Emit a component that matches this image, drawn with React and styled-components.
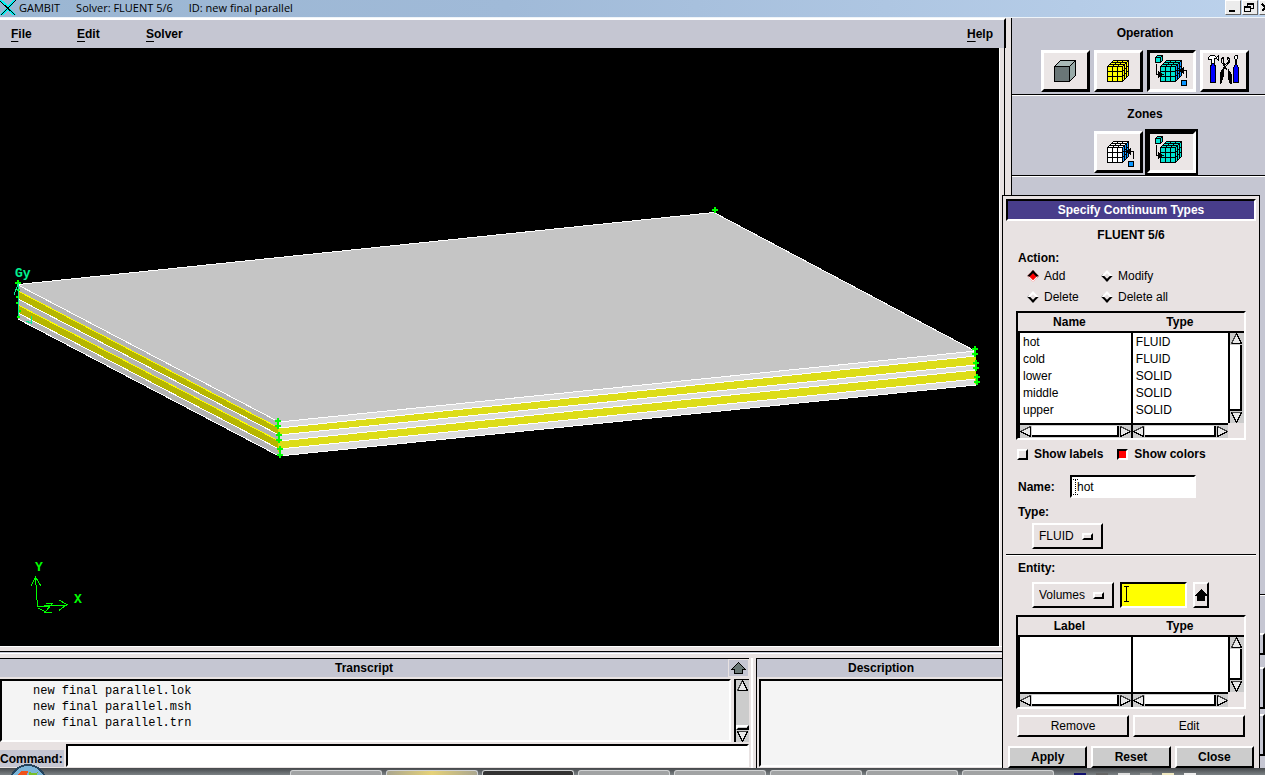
import React, { useState } from "react";
import styled, { createGlobalStyle, css } from "styled-components";

const FLUIDS = [
  ["hot", "FLUID"],
  ["cold", "FLUID"],
  ["lower", "SOLID"],
  ["middle", "SOLID"],
  ["upper", "SOLID"],
];

const FILES = ["new final parallel.lok", "new final parallel.msh", "new final parallel.trn"];

const TEAL = "#00e2d0";
const BLUE = "#0a96ff";

// small cube split in a 3x3 mesh, used by most of the tool icons
function MeshCube({ color, side }) {
  const s = side || color;
  return (
    <g stroke="#000" strokeWidth="1">
      <path d="M10.5 13.5L16.5 7.5H31.5L25.5 13.5Z" fill={color} />
      <path d="M25.5 13.5L31.5 7.5V22.5L25.5 28.5Z" fill={s} />
      <path d="M10.5 13.5H25.5V28.5H10.5Z" fill={color} />
      <path
        fill="none"
        d="M15.5 28V13.5L21.5 7.5M20.5 28V13.5L26.5 7.5M10.5 18.5H25.5L31.5 12.5M10.5 23.5H25.5L31.5 17.5M12.5 11.5H27.5V26.5M14.5 9.5H29.5V24.5"
      />
    </g>
  );
}

function CubeFrom() {
  return (
    <g stroke="#000">
      <path d="M5.5 4.5L7.5 2.5H12.5V7.5L10.5 9.5H5.5Z" fill={TEAL} />
      <path d="M5.5 4.5H10.5V9.5M10.5 4.5L12.5 2.5" fill="none" />
      <path d="M6.5 11V21.5H10" fill="none" />
      <path d="M8 18L14 21.5L8 25Z" fill="#000" stroke="none" />
    </g>
  );
}

function FaceFrom() {
  return (
    <g stroke="#000">
      <path d="M31.5 27.5H36.5V32.5H31.5Z" fill={BLUE} />
      <path d="M36.5 25V17.5H31" fill="none" />
      <path d="M34 14V21L27 17.5Z" fill="#000" stroke="none" />
    </g>
  );
}

function Geometry() {
  return (
    <Icon>
      <g stroke="#000">
        <path d="M10.5 13.5L16.5 7.5H31.5L25.5 13.5Z" fill="#a9b9b7" />
        <path d="M25.5 13.5L31.5 7.5V22.5L25.5 28.5Z" fill="#97aaa8" />
        <path d="M10.5 13.5H25.5V28.5H10.5Z" fill="#6a7677" />
      </g>
    </Icon>
  );
}

function Tools() {
  return (
    <Icon>
      <g stroke="#000">
        <path d="M5.5 4.5L7.5 2.5H11.5L13.5 4.5L15.5 2.5V7.5L13.5 5.5H11.5V10.5H8.5V6.5H5.5Z" fill="#fff" />
        <path d="M8.5 10.5H11.5L12.5 14.5V29.5H7.5V14.5Z" fill="#00f" />
        <path d="M31.5 2.5H34.5V5.5L33.5 6.5V11M31.5 2.5V5.5L32.5 6.5V11" fill="#fff" />
        <path d="M32.5 10.5H33.5L35.5 15.5V29.5H30.5V15.5Z" fill="#00f" />
        <path d="M20.5 4L18.5 6V9L22 14L24 17" fill="none" />
        <path d="M24.5 4L26.5 6V9L22 14L20 17" fill="none" />
        <path d="M21 5L20 7V9L22 12L25 9V7L24 5" fill="none" />
        <path d="M20 16L17 21V30H18L20 24Z" />
        <path d="M25 16L28 21V30H27L25 24Z" />
      </g>
    </Icon>
  );
}

// one vertical wall of the stack, cut in five layers between two corners
function Wall({ x1, x2, left, right, grey, yellow }) {
  return [0, 1, 2, 3, 4].map((i) => (
    <path
      key={i}
      d={`M${x1} ${left[i]}L${x2} ${right[i]}V${right[i + 1]}L${x1} ${left[i + 1]}Z`}
      fill={i % 2 ? yellow : grey}
    />
  ));
}

const CORNERS = [
  [715, 210], [18, 283],
  [278, 421], [278, 426], [279, 435], [279, 440], [280, 449], [280, 455],
  [975, 349], [975, 354], [976, 363], [976, 368], [977, 377], [977, 382],
];

// nodes of the far edge, seen as short ticks
const TICKS = [[18, 290], [17, 297], [17, 303], [19, 311], [18, 317]];

function Model() {
  const left = [285, 291, 299, 305, 313, 319];
  const front = [422, 428, 435, 441, 449, 456];
  const right = [351, 356, 365, 370, 379, 385];
  return (
    <Scene viewBox="0 48 999 598" role="img" aria-label="Layered volume model">
      <path d="M18 285L714 212L976 351L279 422Z" fill="#c5c5c5" />
      <Wall x1={18} x2={279} left={left} right={front} grey="#b3b3b3" yellow="#b6b600" />
      <Wall x1={279} x2={976} left={front} right={right} grey="#dcdcdc" yellow="#dddd18" />
      <g stroke="#fff" fill="none">
        <path d="M18 284.5L714 212.5L976 351.5" />
        {[0, 2, 4, 5].map((i) => (
          <path key={i} d={`M18 ${left[i]}L279 ${front[i]}L976 ${right[i]}`} />
        ))}
        {[1, 3].map((i) => (
          <path key={i} d={`M279 ${front[i]}L976 ${right[i]}`} />
        ))}
        {[1, 3].map((i) => (
          <path key={i} d={`M18 ${left[i]}L279 ${front[i]}`} stroke="#ff0" />
        ))}
      </g>
      <path d="M278.5 418V452M975.5 352V384" stroke="#dcdc00" fill="none" />
      <g stroke="#0f0" strokeWidth="2">
        {CORNERS.map(([x, y]) => (
          <path key={`${x}-${y}`} d={`M${x - 3} ${y}h6M${x} ${y - 3}v6`} />
        ))}
        {TICKS.map(([x, y]) => (
          <path key={`${x}-${y}`} d={`M${x - 1} ${y}h3`} />
        ))}
      </g>
      <g stroke="#00f090" fill="none">
        <path d="M18.5 283V316M14 295L18 284M26 321L31 323V316" />
      </g>
      <AxisText x="15" y="277" fill="#00f090">Gy</AxisText>
      <g stroke="#0f0" fill="none">
        <path d="M37.5 607L35.5 577M31 586L35.5 577L41 586" />
        <path d="M37 607L52 605H67M59 600L67 604.5L59 610.5" />
        <path d="M46 603.5H52.5L45 612H52M38 608L46 612M38 607L50 606" />
      </g>
      <AxisText x="35" y="571" fill="#0f0">Y</AxisText>
      <AxisText x="74" y="603" fill="#0f0">X</AxisText>
    </Scene>
  );
}

function Arrow({ dir }) {
  const shapes = {
    up: ["M6.5 0.5L1.5 10.5H11.5Z", "M6.5 0.5L11.5 10.5H1.5"],
    down: ["M6.5 10.5L1.5 0.5H11.5Z", "M1.5 0.5L6.5 10.5L11.5 0.5"],
    left: ["M0.5 5.5L10.5 0.5V10.5Z", "M0.5 5.5L10.5 10.5V0.5"],
    right: ["M10.5 5.5L0.5 0.5V10.5Z", "M0.5 0.5V10.5L10.5 5.5"],
  };
  const upright = dir === "up" || dir === "down";
  return (
    <ArrowSvg viewBox={upright ? "0 0 13 11" : "0 0 11 11"} $wide={upright}>
      <path d={shapes[dir][0]} fill="#e8e8e8" stroke="#444" />
      <path d={shapes[dir][1]} fill="none" stroke="#000" />
    </ArrowSvg>
  );
}

function HScroll() {
  return (
    <HBar>
      <Arrow dir="left" />
      <HThumb />
      <Arrow dir="right" />
    </HBar>
  );
}

function List({ heads, rows, height }) {
  return (
    <ListBox>
      <ListTable>
        <colgroup>
          <col width="54%" />
          <col width="46%" />
        </colgroup>
        <thead>
          <tr>
            {heads.map((h) => (
              <HeadCell key={h} scope="col">{h}</HeadCell>
            ))}
          </tr>
        </thead>
        <tbody>
          {rows.map(([name, type]) => (
            <tr key={name}>
              <Cell>{name}</Cell>
              <Cell>{type}</Cell>
            </tr>
          ))}
          <FillRow $h={height - rows.length * 17}>
            <Cell />
            <Cell />
          </FillRow>
        </tbody>
        <tfoot>
          <tr>
            <FootCell><HScroll /></FootCell>
            <FootCell><HScroll /></FootCell>
          </tr>
        </tfoot>
      </ListTable>
      <VBar>
        <Arrow dir="up" />
        <VThumb />
        <Arrow dir="down" />
      </VBar>
    </ListBox>
  );
}

function ContinuumDialog() {
  const [action, setAction] = useState("Add");
  const [name, setName] = useState("hot");
  const [labels, setLabels] = useState(false);
  const [colors, setColors] = useState(true);

  return (
    <Dialog>
      <DialogTitle>Specify Continuum Types</DialogTitle>
      <SolverName>FLUENT 5/6</SolverName>
      <ActionGroup>
        <legend>Action:</legend>
        <RadioGrid>
          {["Add", "Modify", "Delete", "Delete all"].map((a) => (
            <RadioLabel key={a}>
              <Radio type="radio" name="action" checked={action === a} onChange={() => setAction(a)} />
              {a}
            </RadioLabel>
          ))}
        </RadioGrid>
      </ActionGroup>
      <List heads={["Name", "Type"]} rows={FLUIDS} height={91} />
      <CheckRow>
        <CheckLabel>
          <Check type="checkbox" checked={labels} onChange={(ev) => setLabels(ev.target.checked)} />
          Show labels
        </CheckLabel>
        <CheckLabel>
          <Check type="checkbox" checked={colors} onChange={(ev) => setColors(ev.target.checked)} />
          Show colors
        </CheckLabel>
      </CheckRow>
      <NameRow>
        <label htmlFor="name">Name:</label>
        <PickBox>
          <NameInput id="name" value={name} onChange={(ev) => setName(ev.target.value)} />
          <svg width="5" height="16" viewBox="0 0 5 16"><path d="M0 .5H5M2.5 .5V15.5M0 15.5H5" stroke="#000" strokeDasharray="1 1" /></svg>
        </PickBox>
      </NameRow>
      <FieldLabel htmlFor="type">Type:</FieldLabel>
      <OptionRow>
        <OptionMenu $w={71}>
          <select id="type"><option>FLUID</option></select>
          <OptionMark />
        </OptionMenu>
      </OptionRow>
      <Rule />
      <FieldLabel htmlFor="entity">Entity:</FieldLabel>
      <OptionRow $entity>
        <OptionMenu $w={82}>
          <select id="entity"><option>Volumes</option></select>
          <OptionMark />
        </OptionMenu>
        <PickBox>
          <PickInput aria-label="Entity pick list" />
          <svg width="7" height="16" viewBox="0 0 7 16"><path d="M1 .5H6M3.5 .5V15.5M1 15.5H6" stroke="#000" /></svg>
        </PickBox>
        <PickButton aria-label="Open list">
          <svg width="12" height="14" viewBox="0 0 12 14"><path d="M6 1L12 7V8H10V13H2V8H0V7Z" /></svg>
        </PickButton>
      </OptionRow>
      <List heads={["Label", "Type"]} rows={[]} height={57} />
      <EditRow>
        <PlainButton>Remove</PlainButton>
        <PlainButton>Edit</PlainButton>
      </EditRow>
      <ApplyRow>
        <MainButton>Apply</MainButton>
        <MainButton>Reset</MainButton>
        <MainButton>Close</MainButton>
      </ApplyRow>
    </Dialog>
  );
}

function App() {
  return (
    <Window>
      <GlobalStyle />
      <TitleBar>
        <svg width="17" height="16" viewBox="0 0 17 16">
          <path d="M0 0L4 1L8 6L13 0H16L10 8L16 15H12L8 10L3 15H0L6 8Z" fill="#00f4f4" />
          <path d="M0 1L15 15M16 0L1 15" stroke="#000" />
        </svg>
        <TitleText>
          <span>GAMBIT</span>
          <span>Solver: FLUENT 5/6</span>
          <span>ID: new final parallel</span>
        </TitleText>
        <WinButton aria-label="Minimize">
          <svg width="12" height="11" viewBox="0 0 12 11"><path d="M3 9H9" stroke="#000" strokeWidth="2" /></svg>
        </WinButton>
        <WinButton aria-label="Restore">
          <svg width="12" height="11" viewBox="0 0 12 11"><path d="M4.5 5V1H10.5V6.5H8M4 2H11M1.5 4.5H7.5V9.5H1.5ZM1 5H8" fill="none" stroke="#000" /></svg>
        </WinButton>
        <WinButton aria-label="Close window" $last>
          <svg width="12" height="11" viewBox="0 0 12 11"><path d="M2 2L9 9M9 2L2 9" stroke="#000" strokeWidth="2" /></svg>
        </WinButton>
      </TitleBar>

      <Workspace>
        <Main>
          <MenuBar>
            <MenuItem $w={66}>File</MenuItem>
            <MenuItem $w={69}>Edit</MenuItem>
            <MenuItem $w={60}>Solver</MenuItem>
            <MenuItem $w={37} $right>Help</MenuItem>
          </MenuBar>
          <Canvas>
            <Model />
          </Canvas>
          <Sash />
          <Bottom>
            <Transcript>
              <PaneHead>
                <h2>Transcript</h2>
                <ExpandButton aria-label="Expand transcript">
                  <svg width="15" height="12" viewBox="0 0 15 12"><path d="M7.5 .5L14.5 7.5H11.5V11.5H3.5V7.5H.5Z" fill="#697775" stroke="#000" /></svg>
                </ExpandButton>
              </PaneHead>
              <LogRow>
                <Log>
                  {FILES.map((f) => (
                    <li key={f}>{f}</li>
                  ))}
                </Log>
                <LogScroll>
                  <Arrow dir="up" />
                  <LogThumb />
                  <Arrow dir="down" />
                </LogScroll>
              </LogRow>
              <CommandRow>
                <label htmlFor="command">Command:</label>
                <CommandInput id="command" />
              </CommandRow>
            </Transcript>
            <Divider />
            <Description>
              <PaneHead><h2>Description</h2></PaneHead>
              <DescriptionBox />
            </Description>
          </Bottom>
        </Main>

        <Sidebar>
          <ToolSection>
            <h2>Operation</h2>
            <ToolRow>
              <ToolButton aria-label="Geometry"><Geometry /></ToolButton>
              <ToolButton aria-label="Mesh"><Icon><MeshCube color="#ffff00" /></Icon></ToolButton>
              <ToolButton aria-label="Zones" $on>
                <Icon><MeshCube color={TEAL} side={BLUE} /><CubeFrom /><FaceFrom /></Icon>
              </ToolButton>
              <ToolButton aria-label="Tools"><Tools /></ToolButton>
            </ToolRow>
          </ToolSection>
          <ToolSection>
            <h2>Zones</h2>
            <ToolRow>
              <ToolButton aria-label="Boundary types"><Icon><MeshCube color="#ffffff" side={BLUE} /><FaceFrom /></Icon></ToolButton>
              <ToolButton aria-label="Continuum types" $on $focus><Icon><MeshCube color={TEAL} /><CubeFrom /></Icon></ToolButton>
            </ToolRow>
          </ToolSection>
          <ControlArea>
            <Rule />
            <ControlBlock $h={22} />
            <ControlBlock $h={42} />
            <ControlBlock $h={42} />
          </ControlArea>
        </Sidebar>

        <ContinuumDialog />
      </Workspace>

      <Taskbar>
        <Orb viewBox="0 0 38 11">
          <circle cx="19" cy="19" r="18" fill="#7ab4d8" stroke="#24435c" strokeWidth="2" />
          <path d="M9 11Q12 5 19 7L18 11Z" fill="#f0521c" />
          <path d="M20 8Q25 10 29 8L28 11H20Z" fill="#78be28" />
        </Orb>
        {["", "gold", "dark", "", "", "", "", ""].map((tone, i) => (
          <Task key={i} $tone={tone} />
        ))}
        <Tray>
          <TrayDot $c="#101070" />
          <TrayDot $c="#666666" />
          <TrayDot $c="#dddddd" />
          <TrayDot $c="#999999" />
          <TrayDot $c="#f0e8c0" />
          <TrayDot $c="#eeeeee" />
        </Tray>
      </Taskbar>
    </Window>
  );
}

const raised = css`
  border: 2px solid;
  border-color: #fff #000 #000 #fff;
`;

const sunken = css`
  border: 2px solid;
  border-color: #000 #fff #fff #000;
`;

const GlobalStyle = createGlobalStyle`
  * {
    box-sizing: border-box;
  }
  body {
    margin: 0;
    overflow: hidden;
    background: #c5c6d2;
    color: #000;
    font: 12px/16px "Liberation Sans", Arial, sans-serif;
  }
  h1, h2, ul, fieldset {
    margin: 0;
    padding: 0;
    border: 0;
  }
  h1, h2 {
    font: inherit;
    font-weight: bold;
  }
  button, input, select {
    font: inherit;
    color: inherit;
    margin: 0;
    padding: 0;
    border-radius: 0;
    outline: none;
  }
  svg {
    display: block;
    shape-rendering: crispEdges;
  }
`;

const Window = styled.div`
  display: flex;
  flex-direction: column;
  height: 100vh;
  overflow: hidden;
`;

const TitleBar = styled.header`
  display: flex;
  flex: none;
  height: 18px;
  background: linear-gradient(90deg, #9bb6d2, #a0bad8 40%, #bcd2ec);
  border-bottom: 1px solid #eef3f8;
`;

const TitleText = styled.h1`
  display: flex;
  flex: 1;
  gap: 16px;
  padding-left: 2px;
  && {
    font: 11px/16px "Open Sans", "Noto Sans", sans-serif;
  }
`;

const WinButton = styled.button`
  width: 16px;
  height: 15px;
  background: #ececec;
  border: 1px solid;
  border-color: #fff #666 #666 #fff;
  margin-right: ${(p) => (p.$last ? "-10px" : "1px")};
  flex: none;
`;

const Workspace = styled.div`
  position: relative;
  display: flex;
  flex: 1;
  min-height: 0;
`;

const Main = styled.main`
  display: flex;
  flex-direction: column;
  flex: 1;
  min-width: 0;
  background: #e8e2e2;
  border-right: 1px solid #000;
`;

const MenuBar = styled.nav`
  display: flex;
  flex: none;
  height: 30px;
  margin-right: 5px;
  padding-left: 11px;
  background: #c5c6d2;
  border-top: 2px solid #fff;
  border-right: 2px solid #000;
`;

const MenuItem = styled.button`
  width: ${(p) => p.$w}px;
  margin-left: ${(p) => (p.$right ? "auto" : "0")};
  border: 0;
  background: none;
  text-align: left;
  font-weight: bold;
  &::first-letter {
    text-decoration: underline;
    text-underline-offset: 3px;
  }
`;

const Canvas = styled.section`
  flex: 1;
  min-height: 0;
  background: #000;
  margin-right: 12px;
  box-shadow: 1px 0 #fff, 5px 0 #e8e2e2, 6px 0 #000;
`;

const Scene = styled.svg`
  width: 100%;
  height: 100%;
`;

const AxisText = styled.text`
  font: bold 13px "Liberation Mono", monospace;
`;

const Sash = styled.div`
  flex: none;
  height: 8px;
  border-top: 1px solid #fff;
  border-bottom: 1px solid #fff;
  box-shadow: inset 0 -1px #c5c6d2, inset 0 -2px #000;
`;

const Bottom = styled.section`
  display: flex;
  flex: none;
  height: 114px;
  padding: 4px 6px 0 0;
`;

const Transcript = styled.section`
  display: flex;
  flex-direction: column;
  flex: 3;
  min-width: 0;
`;

const Description = styled.section`
  display: flex;
  flex-direction: column;
  width: 248px;
`;

const PaneHead = styled.div`
  display: flex;
  flex: none;
  align-items: center;
  height: 21px;
  border-top: 1px solid #000;
  border-bottom: 2px solid #e8e2e2;
  background: #c5c6d2;
  h2 {
    flex: 1;
    line-height: 18px;
    text-align: center;
  }
`;

const ExpandButton = styled.button`
  display: grid;
  place-items: center;
  width: 21px;
  height: 18px;
  background: none;
  border: 1px solid #e8e2e2;
`;

const LogRow = styled.div`
  display: flex;
  flex: none;
  gap: 3px;
  height: 63px;
`;

const Log = styled.ul`
  ${sunken}
  flex: 1;
  padding: 2px 0 0 31px;
  background: #f4f4f4;
  list-style: none;
  font: 12px/16px "Liberation Mono", monospace;
`;

const LogScroll = styled.div`
  display: flex;
  flex-direction: column;
  width: 15px;
  border-left: 2px solid #000;
  border-top: 1px solid #000;
  background: #ccc;
`;

const LogThumb = styled.div`
  ${raised}
  height: 5px;
  margin-top: auto;
  margin-bottom: 1px;
`;

const CommandRow = styled.div`
  display: flex;
  flex: 1;
  align-items: flex-end;
  gap: 2px;
  padding: 2px 0 1px;
  label {
    width: 64px;
    background: #c5c6d2;
    font-weight: bold;
    padding: 1px 0 0;
  }
`;

const CommandInput = styled.input`
  ${sunken}
  flex: 1;
  min-width: 0;
  height: 23px;
  background: #fff;
`;

const Divider = styled.div`
  width: 8px;
  border-right: 1px solid #000;
  box-shadow: inset 2px 0 #e8e2e2, inset 4px 0 #fff;
`;

const DescriptionBox = styled.div`
  ${sunken}
  flex: 1;
  margin: 0 0 1px 2px;
  background: #f4f4f4;
`;

const Sidebar = styled.aside`
  display: flex;
  flex-direction: column;
  width: 253px;
  flex: none;
  background: #c5c6d2;
`;

const ToolSection = styled.section`
  flex: none;
  height: 81px;
  padding: 10px 0 0 29px;
  border-bottom: 1px solid #fff;
  box-shadow: inset 0 -1px #000;
  &:first-child {
    height: 78px;
    padding-top: 7px;
  }
  h2 {
    width: 208px;
    text-align: center;
  }
`;

const ToolRow = styled.div`
  display: flex;
  justify-content: center;
  gap: 4px;
  width: 208px;
  margin-top: 9px;
`;

const ToolButton = styled.button`
  width: 49px;
  height: 42px;
  background: #ebe6e6;
  border: 3px solid;
  border-color: ${(p) => (p.$on ? "#000 #fff #fff #000" : "#fff #000 #000 #fff")};
  box-shadow: ${(p) => (p.$focus ? "0 0 0 2px #000" : "none")};
`;

const Icon = styled.svg.attrs({ viewBox: "0 0 43 36" })`
  width: 43px;
  height: 36px;
`;

const Rule = styled.hr`
  flex: none;
  width: 100%;
  height: 2px;
  margin: 0 0 4px;
  border: 0;
  border-top: 1px solid #000;
  border-bottom: 1px solid #fff;
`;

const ControlArea = styled.div`
  display: flex;
  flex-direction: column;
  flex: 1;
  justify-content: flex-end;
  gap: 5px;
  padding-bottom: 12px;
  ${Rule} {
    margin-bottom: 32px;
  }
`;

const ControlBlock = styled.div`
  ${raised}
  flex: none;
  height: ${(p) => p.$h}px;
  &:nth-child(2) {
    margin-bottom: 7px;
  }
`;

const Dialog = styled.form.attrs({ onSubmit: (ev) => ev.preventDefault() })`
  position: absolute;
  right: 5px;
  top: 177px;
  bottom: 0;
  width: 258px;
  display: flex;
  flex-direction: column;
  padding: 3px 3px 0;
  background: #e8e2e2;
  border: 1px solid #000;
  border-bottom: 0;
`;

const DialogTitle = styled.h2`
  ${sunken}
  height: 22px;
  line-height: 18px;
  background: #483d8b;
  color: #fff;
  text-align: center;
`;

const SolverName = styled.h2`
  margin: 6px 0 7px;
  text-align: center;
`;

const ActionGroup = styled.fieldset`
  padding: 0 12px;
  legend {
    padding: 0;
    font-weight: bold;
  }
`;

const RadioGrid = styled.div`
  display: grid;
  grid-template-columns: 74px 1fr;
  gap: 5px 0;
  padding: 2px 0 0 11px;
`;

const RadioLabel = styled.label`
  display: flex;
  align-items: center;
  gap: 7px;
`;

const Radio = styled.input`
  appearance: none;
  width: 8px;
  height: 8px;
  border: 2px solid;
  border-color: #fff #000 #000 #fff;
  transform: rotate(45deg);
  &:checked {
    background: #f00;
    border-width: 2px 1px 1px 2px;
    border-color: #000 #fff #fff #000;
  }
`;

const ListBox = styled.div`
  ${sunken}
  display: flex;
  flex: none;
  margin: 6px 10px 0;
`;

const ListTable = styled.table`
  flex: 1;
  table-layout: fixed;
  border-collapse: collapse;
`;

const HeadCell = styled.th`
  height: 19px;
  padding: 0 12px 0 0;
  border-bottom: 2px solid #000;
  line-height: 16px;
  &:last-child {
    padding: 0;
  }
`;

const Cell = styled.td`
  height: 17px;
  padding: 1px 0 0 3px;
  background: #fff;
  border-left: 2px solid #000;
  line-height: 16px;
`;

const FillRow = styled.tr`
  height: ${(p) => p.$h}px;
  ${Cell} {
    height: ${(p) => p.$h}px;
    padding: 0;
    line-height: 0;
  }
`;

const FootCell = styled.td`
  padding: 0;
  border-top: 2px solid #000;
  border-left: 2px solid #000;
`;

const HBar = styled.div`
  display: flex;
  height: 13px;
  align-items: center;
  background: #ccc;
`;

const HThumb = styled.div`
  flex: 1;
  height: 11px;
  margin: 0 1px;
  background: #fff;
  border-right: 2px solid #000;
  border-bottom: 2px solid #000;
`;

const VBar = styled.div`
  display: flex;
  flex-direction: column;
  width: 16px;
  margin: 18px 0 15px;
  padding-right: 1px;
  background: #ccc;
  border-top: 2px solid #000;
  border-left: 2px solid #000;
`;

const VThumb = styled.div`
  flex: 1;
  margin: 1px 1px 1px 0;
  background: #fff;
  border-right: 2px solid #000;
  border-bottom: 2px solid #000;
`;

const ArrowSvg = styled.svg`
  flex: none;
  width: ${(p) => (p.$wide ? 13 : 11)}px;
  height: 11px;
`;

const CheckRow = styled.div`
  display: flex;
  gap: 14px;
  padding: 6px 11px 0;
`;

const CheckLabel = styled.label`
  display: flex;
  align-items: center;
  gap: 6px;
  font-weight: bold;
`;

const Check = styled.input`
  ${raised}
  appearance: none;
  width: 11px;
  height: 11px;
  &:checked {
    background: #f00;
    border-color: #000 #fff #fff #000;
  }
`;

const NameRow = styled.div`
  display: flex;
  align-items: center;
  margin: 13px 0 6px;
  padding-left: 12px;
  label {
    width: 52px;
    font-weight: bold;
  }
`;

const NameInput = styled.input`
  ${sunken}
  display: block;
  width: 126px;
  height: 23px;
  padding-left: 5px;
  background: #fff;
`;

const FieldLabel = styled.label`
  padding-left: 12px;
  font-weight: bold;
`;

const OptionRow = styled.div`
  display: flex;
  gap: 6px;
  margin: ${(p) => (p.$entity ? "6px 0 1px" : "3px 0 5px")};
  padding-left: 26px;
`;

const OptionMenu = styled.div`
  ${raised}
  display: flex;
  align-items: center;
  width: ${(p) => p.$w}px;
  height: 26px;
  padding: 0 8px 0 5px;
  select {
    flex: 1;
    min-width: 0;
    appearance: none;
    border: 0;
    background: none;
  }
`;

const OptionMark = styled.span`
  ${raised}
  width: 11px;
  height: 7px;
  pointer-events: none;
`;

const PickBox = styled.div`
  position: relative;
  svg {
    position: absolute;
    left: 3px;
    top: 4px;
  }
`;

const PickInput = styled.input`
  ${sunken}
  display: block;
  width: 67px;
  height: 26px;
  padding-left: 12px;
  background: #ff0;
`;

const PickButton = styled.button`
  ${raised}
  display: grid;
  place-items: center;
  width: 16px;
  height: 26px;
  background: none;
`;

const EditRow = styled.div`
  display: flex;
  gap: 4px;
  margin: 6px 11px 9px;
`;

const PlainButton = styled.button`
  ${raised}
  flex: 1;
  height: 22px;
  background: none;
`;

const ApplyRow = styled.div`
  display: flex;
  gap: 4px;
  padding: 0 2px;
`;

const MainButton = styled(PlainButton)`
  background: #ccc;
  font-weight: bold;
`;

const Taskbar = styled.footer`
  position: relative;
  display: flex;
  flex: none;
  gap: 4px;
  height: 7px;
  padding: 2px 0 0 290px;
  background: linear-gradient(#45484b, #7c8285);
`;

const Orb = styled.svg`
  position: absolute;
  left: 9px;
  bottom: 0;
  width: 38px;
  height: 11px;
`;

const tones = {
  gold: "linear-gradient(90deg, #aaa68f, #e6d278, #aaa68f)",
  dark: "#333",
};

const Task = styled.div`
  width: 92px;
  background: ${(p) => tones[p.$tone] || "#a1a3a4"};
  border: 1px solid #d0d2d3;
  border-bottom: 0;
  border-radius: 3px 3px 0 0;
`;

const Tray = styled.div`
  display: flex;
  flex: 1;
  gap: 10px;
  padding: 3px 0 0 16px;
`;

const TrayDot = styled.span`
  width: 12px;
  background: ${(p) => p.$c};
`;

export default App;
